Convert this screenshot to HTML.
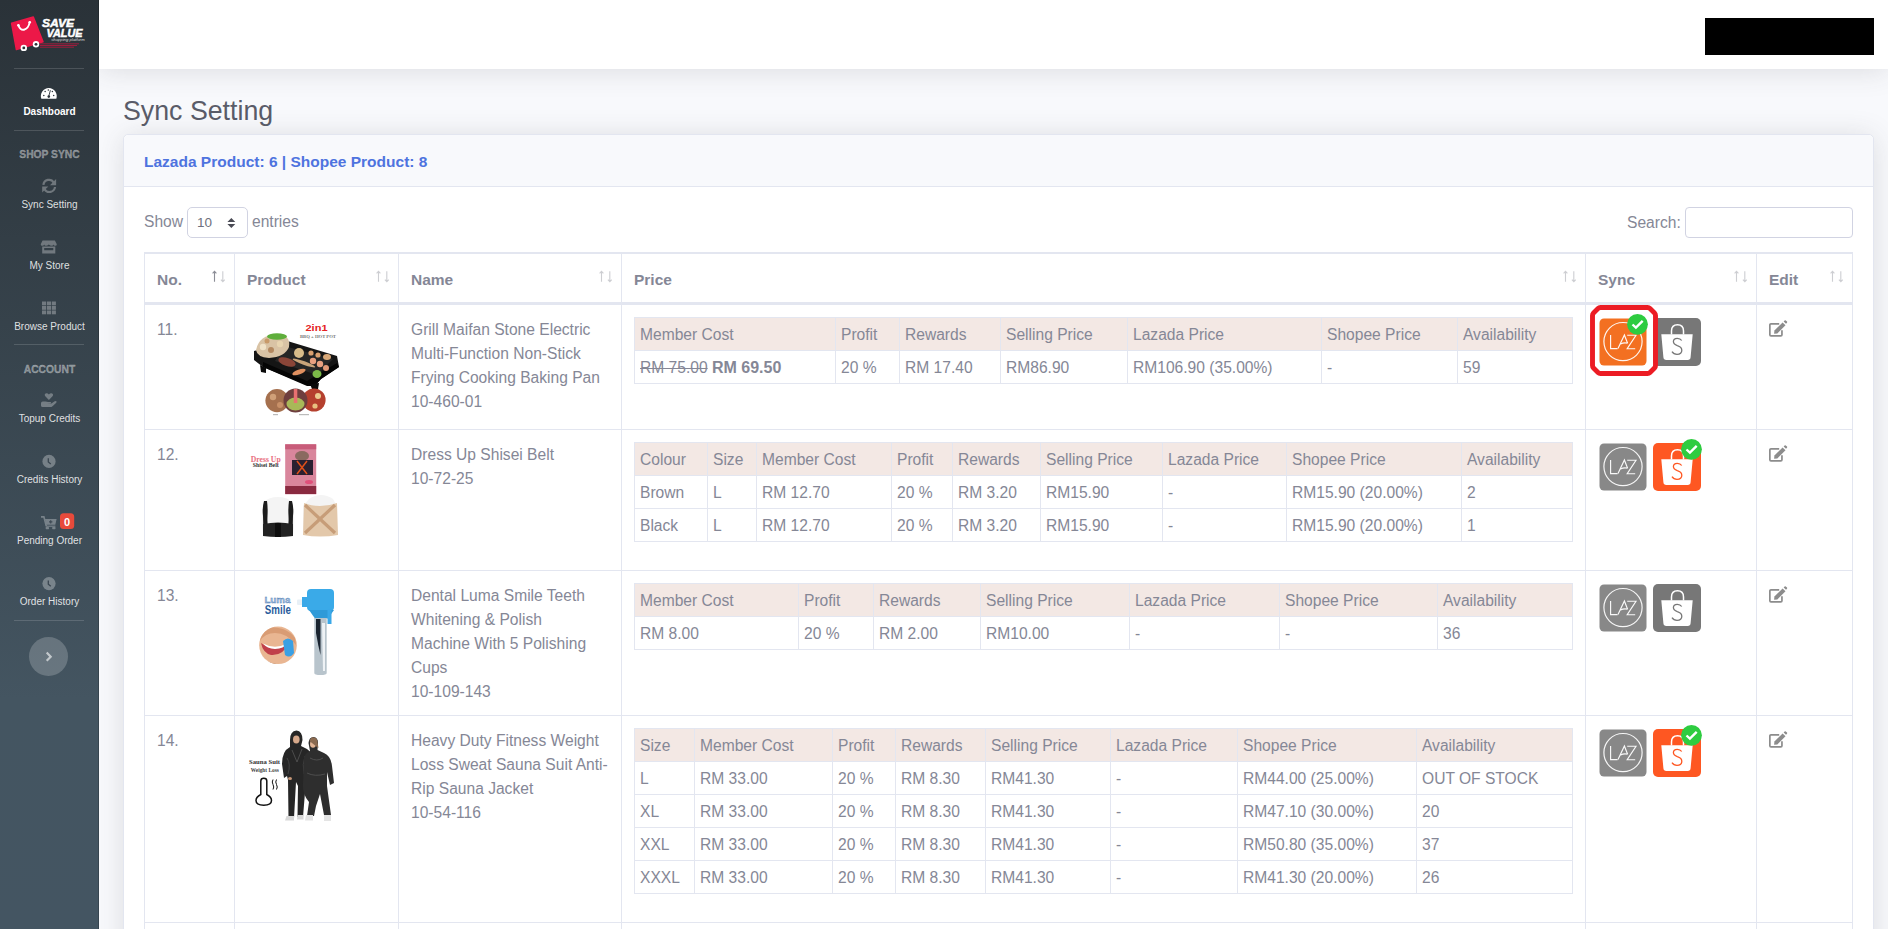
<!DOCTYPE html><html><head><meta charset="utf-8"><style>

*{box-sizing:border-box;margin:0;padding:0}
html,body{width:1888px;height:929px;overflow:hidden}
body{font-family:"Liberation Sans",sans-serif;background:#f8f9fc;color:#858796;font-size:15.6px;line-height:24px;position:relative}
.a{position:absolute;white-space:nowrap}
#sb{position:absolute;left:0;top:0;width:99px;height:929px;background:linear-gradient(180deg,#2a3238 0px,#445561 700px,#445562 929px);z-index:5}
#sb:after{content:"";position:absolute;right:0;top:0;width:1px;height:100%;background:rgba(0,0,0,.18)}
.dv{position:absolute;left:14px;width:70px;height:1px;background:rgba(255,255,255,.15)}
.hd{position:absolute;left:0;width:99px;text-align:center;font-size:10.3px;font-weight:bold;color:rgba(255,255,255,.4);line-height:12px;white-space:nowrap;-webkit-text-stroke:.3px rgba(255,255,255,.4)}
.it{position:absolute;left:0;width:99px;text-align:center;font-size:10px;color:rgba(255,255,255,.85);line-height:12px;white-space:nowrap}
#top{position:absolute;left:99px;top:0;width:1789px;height:69px;background:#fff;box-shadow:0 2px 28px 0 rgba(58,59,69,.15);z-index:3}
#blk{position:absolute;left:1705px;top:18px;width:169px;height:37px;background:#000;z-index:4}
#title{position:absolute;left:123px;top:93px;font-size:28px;line-height:36px;color:#5a5c69;white-space:nowrap;transform:scaleX(.955);transform-origin:0 0}
#card{position:absolute;left:123px;top:134px;width:1751px;height:830px;background:#fff;border:1px solid #e3e6f0;border-radius:5px;box-shadow:0 2px 28px 0 rgba(58,59,69,.15)}
#ch{position:absolute;left:0;top:0;width:1749px;height:52px;background:#f8f9fc;border-bottom:1px solid #e3e6f0;border-radius:5px 5px 0 0}
#ch span{position:absolute;left:20px;top:15px;font-weight:bold;color:#4e73df;font-size:15.5px;line-height:24px;white-space:nowrap}
#sel{position:absolute;left:187px;top:207px;width:61px;height:31px;border:1px solid #d1d3e2;border-radius:5px;background:#fff}
#srch{position:absolute;left:1685px;top:207px;width:168px;height:31px;border:1px solid #d1d3e2;border-radius:4px;background:#fff}
.hl{position:absolute;left:144px;width:1709px;background:#e3e6f0}
.vl{position:absolute;top:252px;width:1px;height:677px;background:#e3e6f0}
.th{position:absolute;font-weight:bold;font-size:15.5px;white-space:nowrap}
.it2{position:absolute;left:634px;width:938px;table-layout:fixed;border-collapse:collapse}
.it2 td{border:1px solid #e3e6f0;padding:5px 5px 3px;height:33px;white-space:nowrap;overflow:hidden;vertical-align:middle}
.it2 tr.h td{background:#f3e8e4}
.ico{position:absolute;width:48px;height:48px;border-radius:5px}

</style></head><body>
<div id="sb">
<div class="dv" style="top:68px"></div>
<div class="it" style="top:106px;font-weight:bold;color:#fff;font-size:10px">Dashboard</div>
<div class="dv" style="top:130px"></div>
<div class="hd" style="top:149px">SHOP SYNC</div>
<div class="it" style="top:199px">Sync Setting</div>
<div class="it" style="top:260px">My Store</div>
<div class="it" style="top:321px">Browse Product</div>
<div class="dv" style="top:344px"></div>
<div class="hd" style="top:364px">ACCOUNT</div>
<div class="it" style="top:413px">Topup Credits</div>
<div class="it" style="top:474px">Credits History</div>
<div class="it" style="top:535px">Pending Order</div>
<div class="it" style="top:596px">Order History</div>
<div class="dv" style="top:620px"></div>
<div style="position:absolute;left:29px;top:637px;width:39px;height:39px;border-radius:50%;background:rgba(255,255,255,.2)"></div>
<svg style="position:absolute;left:0;top:0;z-index:6" width="99" height="700" viewBox="0 0 99 700"><polygon points="11.6,23.3 33.3,17 43,41.8 16.4,49.5" fill="#ec1848" stroke="#ec1848" stroke-width="1.5" stroke-linejoin="round"/><path d="M18.4 25.3Q20.5 30.5 24 29.7Q28.5 28.7 29.7 22.2" fill="none" stroke="#fff" stroke-width="1.9" stroke-linecap="round"/><circle cx="18.4" cy="25.3" r="1.3" fill="#fff"/><circle cx="29.7" cy="22.2" r="1.3" fill="#fff"/><g fill="#9b1e3e"><rect x="40" y="43.3" width="39" height="1" /><rect x="40" y="45" width="37" height="1"/><rect x="40" y="46.7" width="34" height="1"/></g><circle cx="23.8" cy="47.9" r="3.2" fill="#fff"/><circle cx="23.8" cy="47.9" r="1.4" fill="#2a3238"/><circle cx="36" cy="44.3" r="3.2" fill="#fff"/><circle cx="36" cy="44.3" r="1.4" fill="#2a3238"/><text x="42" y="27" font-family="Liberation Sans" font-weight="bold" font-style="italic" font-size="10.2" fill="#fff" stroke="#fff" stroke-width=".45" textLength="32" lengthAdjust="spacingAndGlyphs">SAVE</text><text x="46.5" y="36.8" font-family="Liberation Sans" font-weight="bold" font-style="italic" font-size="10.2" fill="#fff" stroke="#fff" stroke-width=".45" textLength="36" lengthAdjust="spacingAndGlyphs">VALUE</text><text x="51.2" y="41.2" font-family="Liberation Sans" font-style="italic" font-size="2.8" fill="#ddd" textLength="33.5" lengthAdjust="spacingAndGlyphs">shopping platform</text><path d="M41.3 98.7A7.95 7.95 0 1 1 56.3 98.7Z" fill="#fff"/><g fill="#2b323a"><circle cx="43.8" cy="95.4" r=".75"/><circle cx="45.1" cy="91.5" r=".75"/><circle cx="48.3" cy="89.9" r=".75"/><circle cx="52.4" cy="91.5" r=".75"/><circle cx="53.7" cy="95.4" r=".75"/><circle cx="48.8" cy="96.6" r="1.3"/><path d="M48.7 96.5L50.4 90.2" stroke="#2b323a" stroke-width=".9"/></g><g opacity=".3"><g fill="none" stroke="#fff" stroke-width="2.2"><path d="M43.4 184.8A5.6 5.6 0 0 1 53.8 182.6"/><path d="M55 187A5.6 5.6 0 0 1 44.6 189.2"/></g><g fill="#fff"><path d="M56.1 179V185.3H50Z"/><path d="M42.2 192.5V186.4H48.3Z"/></g></g><g fill="#fff" opacity=".3"><path d="M42.6 240.6H54.9L56.8 244.2Q56.8 245.8 55.2 245.8Q53.6 245.8 53.4 244.6Q53.1 245.8 51.7 245.8Q50.2 245.8 48.8 244.6Q47.4 245.8 45.9 245.8Q44.5 245.8 44.2 244.6Q43.9 245.8 42.3 245.8Q40.7 245.8 40.7 244.2Z"/><path d="M42.2 246.6H55.3V253.6H42.2ZM44.2 248V250.3H53.3V248Z" fill-rule="evenodd"/></g><g fill="#fff" opacity=".3"><rect x="42.0" y="301.5" width="4.1" height="3.8"/><rect x="46.9" y="301.5" width="4.1" height="3.8"/><rect x="51.8" y="301.5" width="4.1" height="3.8"/><rect x="42.0" y="306.0" width="4.1" height="3.8"/><rect x="46.9" y="306.0" width="4.1" height="3.8"/><rect x="51.8" y="306.0" width="4.1" height="3.8"/><rect x="42.0" y="310.5" width="4.1" height="3.8"/><rect x="46.9" y="310.5" width="4.1" height="3.8"/><rect x="51.8" y="310.5" width="4.1" height="3.8"/></g><g fill="#fff" opacity=".3"><path d="M48.9 400L45.3 396.3Q44.3 395 45 393.9Q46.2 392.6 47.8 393.6L48.9 394.4L50 393.6Q51.6 392.6 52.8 393.9Q53.5 395 52.5 396.3Z"/><path d="M41 403.3Q41 401.6 42.7 401.5L45.5 401.4Q47 401.4 48 401.9H50.5Q51.4 402.2 51.1 403L50.8 403.3L47.2 403.7L51.4 403.4L54.7 401.2Q55.9 400.7 56.6 401.5Q56.8 402.2 56 403L52.8 405.9Q51.6 407.1 49.8 407.1H42.7Q41 407.1 41 405.5Z"/></g><circle cx="49" cy="461.4" r="6.6" fill="#fff" opacity=".3"/><path d="M48.3 458.2V462.0L50.8 464.0" fill="none" stroke="#3a4650" stroke-width="1.3"/><circle cx="49" cy="583.6" r="6.6" fill="#fff" opacity=".3"/><path d="M48.3 580.4V584.2L50.8 586.2" fill="none" stroke="#3a4650" stroke-width="1.3"/><g opacity=".3"><path d="M41 516.9H43.9L46.3 526.3" fill="none" stroke="#fff" stroke-width="1.6"/><path d="M44.9 519.1H56.6L55.3 524.8H46.2Z" fill="#fff"/><rect x="46.2" y="525.6" width="9.2" height="1.2" fill="#fff"/><rect x="45.7" y="526.9" width="3.3" height="2.3" rx=".6" fill="#fff"/><rect x="52.2" y="526.9" width="3.3" height="2.3" rx=".6" fill="#fff"/></g><path d="M50.7 520.2V523.6M49 521.9H52.4" stroke="#3e4a54" stroke-width="1.2"/><rect x="60" y="513.2" width="14.2" height="15.9" rx="3.5" fill="#e74a3b"/><text x="67.1" y="525.5" text-anchor="middle" font-family="Liberation Sans" font-weight="bold" font-size="11" fill="#fff">0</text><path d="M46.7 652.6L50.7 656.7L46.7 660.8" fill="none" stroke="rgba(255,255,255,.6)" stroke-width="2.2"/></svg></div>
<div id="top"></div><div id="blk"></div>
<div id="title">Sync Setting</div>
<div id="card"><div id="ch"><span>Lazada Product: 6 | Shopee Product: 8</span></div></div>
<div class="a" style="left:144px;top:210px">Show</div>
<div id="sel"><span class="a" style="left:9px;top:3px;font-size:13.5px;color:#6e707e">10</span><svg class="a" style="left:39px;top:10px" width="9" height="10" viewBox="0 0 9 10"><path d="M0.4 3.9L4.35 0L8.3 3.9Z M0.4 6L4.35 9.9L8.3 6Z" fill="#4a4b55"/></svg></div>
<div class="a" style="left:252px;top:210px">entries</div>
<div class="a" style="left:1627px;top:211px">Search:</div>
<div id="srch"></div>
<div class="hl" style="top:252px;height:2px"></div>
<div class="hl" style="top:302px;height:3px"></div>
<div class="hl" style="top:429px;height:1px"></div>
<div class="hl" style="top:570px;height:1px"></div>
<div class="hl" style="top:715px;height:1px"></div>
<div class="hl" style="top:922px;height:1px"></div>
<div class="vl" style="left:144px"></div>
<div class="vl" style="left:234px"></div>
<div class="vl" style="left:398px"></div>
<div class="vl" style="left:621px"></div>
<div class="vl" style="left:1585px"></div>
<div class="vl" style="left:1756px"></div>
<div class="vl" style="left:1852px"></div>
<div class="th" style="left:157px;top:268px">No.</div>
<svg class="a" style="left:211px;top:270px" width="14" height="14" viewBox="0 0 14 14"><g stroke="#5a5c69" stroke-width="1.1" fill="none" opacity=".7"><path d="M3.5 11.8V1.3M1.6 3.3L3.5 1.3L5.4 3.3"/></g><g stroke="#5a5c69" stroke-width="1.1" fill="none" opacity=".3"><path d="M11.8 1.2V11.7M9.9 9.7L11.8 11.7L13.7 9.7"/></g></svg>
<div class="th" style="left:247px;top:268px">Product</div>
<svg class="a" style="left:375px;top:270px" width="14" height="14" viewBox="0 0 14 14"><g stroke="#5a5c69" stroke-width="1.1" fill="none" opacity=".3"><path d="M3.5 11.8V1.3M1.6 3.3L3.5 1.3L5.4 3.3"/></g><g stroke="#5a5c69" stroke-width="1.1" fill="none" opacity=".3"><path d="M11.8 1.2V11.7M9.9 9.7L11.8 11.7L13.7 9.7"/></g></svg>
<div class="th" style="left:411px;top:268px">Name</div>
<svg class="a" style="left:598px;top:270px" width="14" height="14" viewBox="0 0 14 14"><g stroke="#5a5c69" stroke-width="1.1" fill="none" opacity=".3"><path d="M3.5 11.8V1.3M1.6 3.3L3.5 1.3L5.4 3.3"/></g><g stroke="#5a5c69" stroke-width="1.1" fill="none" opacity=".3"><path d="M11.8 1.2V11.7M9.9 9.7L11.8 11.7L13.7 9.7"/></g></svg>
<div class="th" style="left:634px;top:268px">Price</div>
<svg class="a" style="left:1562px;top:270px" width="14" height="14" viewBox="0 0 14 14"><g stroke="#5a5c69" stroke-width="1.1" fill="none" opacity=".3"><path d="M3.5 11.8V1.3M1.6 3.3L3.5 1.3L5.4 3.3"/></g><g stroke="#5a5c69" stroke-width="1.1" fill="none" opacity=".3"><path d="M11.8 1.2V11.7M9.9 9.7L11.8 11.7L13.7 9.7"/></g></svg>
<div class="th" style="left:1598px;top:268px">Sync</div>
<svg class="a" style="left:1733px;top:270px" width="14" height="14" viewBox="0 0 14 14"><g stroke="#5a5c69" stroke-width="1.1" fill="none" opacity=".3"><path d="M3.5 11.8V1.3M1.6 3.3L3.5 1.3L5.4 3.3"/></g><g stroke="#5a5c69" stroke-width="1.1" fill="none" opacity=".3"><path d="M11.8 1.2V11.7M9.9 9.7L11.8 11.7L13.7 9.7"/></g></svg>
<div class="th" style="left:1769px;top:268px">Edit</div>
<svg class="a" style="left:1829px;top:270px" width="14" height="14" viewBox="0 0 14 14"><g stroke="#5a5c69" stroke-width="1.1" fill="none" opacity=".3"><path d="M3.5 11.8V1.3M1.6 3.3L3.5 1.3L5.4 3.3"/></g><g stroke="#5a5c69" stroke-width="1.1" fill="none" opacity=".3"><path d="M11.8 1.2V11.7M9.9 9.7L11.8 11.7L13.7 9.7"/></g></svg>
<div class="a" style="left:157px;top:318px">11.</div>
<div class="a" style="left:411px;top:318px">Grill Maifan Stone Electric<br>Multi-Function Non-Stick<br>Frying Cooking Baking Pan<br>10-460-01</div>
<div class="a" style="left:157px;top:443px">12.</div>
<div class="a" style="left:411px;top:443px">Dress Up Shisei Belt<br>10-72-25</div>
<div class="a" style="left:157px;top:584px">13.</div>
<div class="a" style="left:411px;top:584px">Dental Luma Smile Teeth<br>Whitening &amp; Polish<br>Machine With 5 Polishing<br>Cups<br>10-109-143</div>
<div class="a" style="left:157px;top:729px">14.</div>
<div class="a" style="left:411px;top:729px">Heavy Duty Fitness Weight<br>Loss Sweat Sauna Suit Anti-<br>Rip Sauna Jacket<br>10-54-116</div>
<table class="it2" style="top:317px"><colgroup><col style="width:201px"><col style="width:64px"><col style="width:101px"><col style="width:127px"><col style="width:194px"><col style="width:136px"><col style="width:115px"></colgroup><tr class="h"><td>Member Cost</td><td>Profit</td><td>Rewards</td><td>Selling Price</td><td>Lazada Price</td><td>Shopee Price</td><td>Availability</td></tr><tr><td><s>RM 75.00</s> <b style="font-size:16px">RM 69.50</b></td><td>20 %</td><td>RM 17.40</td><td>RM86.90</td><td>RM106.90 (35.00%)</td><td>-</td><td>59</td></tr></table>
<table class="it2" style="top:442px"><colgroup><col style="width:73px"><col style="width:49px"><col style="width:135px"><col style="width:61px"><col style="width:88px"><col style="width:122px"><col style="width:124px"><col style="width:175px"><col style="width:111px"></colgroup><tr class="h"><td>Colour</td><td>Size</td><td>Member Cost</td><td>Profit</td><td>Rewards</td><td>Selling Price</td><td>Lazada Price</td><td>Shopee Price</td><td>Availability</td></tr><tr><td>Brown</td><td>L</td><td>RM 12.70</td><td>20 %</td><td>RM 3.20</td><td>RM15.90</td><td>-</td><td>RM15.90 (20.00%)</td><td>2</td></tr><tr><td>Black</td><td>L</td><td>RM 12.70</td><td>20 %</td><td>RM 3.20</td><td>RM15.90</td><td>-</td><td>RM15.90 (20.00%)</td><td>1</td></tr></table>
<table class="it2" style="top:583px"><colgroup><col style="width:164px"><col style="width:75px"><col style="width:107px"><col style="width:149px"><col style="width:150px"><col style="width:158px"><col style="width:135px"></colgroup><tr class="h"><td>Member Cost</td><td>Profit</td><td>Rewards</td><td>Selling Price</td><td>Lazada Price</td><td>Shopee Price</td><td>Availability</td></tr><tr><td>RM 8.00</td><td>20 %</td><td>RM 2.00</td><td>RM10.00</td><td>-</td><td>-</td><td>36</td></tr></table>
<table class="it2" style="top:728px"><colgroup><col style="width:60px"><col style="width:138px"><col style="width:63px"><col style="width:90px"><col style="width:125px"><col style="width:127px"><col style="width:179px"><col style="width:156px"></colgroup><tr class="h"><td>Size</td><td>Member Cost</td><td>Profit</td><td>Rewards</td><td>Selling Price</td><td>Lazada Price</td><td>Shopee Price</td><td>Availability</td></tr><tr><td>L</td><td>RM 33.00</td><td>20 %</td><td>RM 8.30</td><td>RM41.30</td><td>-</td><td>RM44.00 (25.00%)</td><td>OUT OF STOCK</td></tr><tr><td>XL</td><td>RM 33.00</td><td>20 %</td><td>RM 8.30</td><td>RM41.30</td><td>-</td><td>RM47.10 (30.00%)</td><td>20</td></tr><tr><td>XXL</td><td>RM 33.00</td><td>20 %</td><td>RM 8.30</td><td>RM41.30</td><td>-</td><td>RM50.80 (35.00%)</td><td>37</td></tr><tr><td>XXXL</td><td>RM 33.00</td><td>20 %</td><td>RM 8.30</td><td>RM41.30</td><td>-</td><td>RM41.30 (20.00%)</td><td>26</td></tr></table>
<svg class="a" style="left:1599px;top:318px;z-index:3;overflow:visible" width="48" height="48" viewBox="0 0 48 48"><rect x="0.5" y="0.5" width="47" height="47" rx="4.5" fill="#f37021"/><circle cx="24" cy="23.6" r="19.1" fill="none" stroke="#fff" stroke-opacity=".92" stroke-width="1.2"/><g fill="none" stroke="#fff" stroke-opacity=".95" stroke-width="1.15" stroke-linejoin="miter"><path d="M11.6 17V30.6H18.6"/><path d="M19 30.6L25.4 17L28.6 25.2M21.5 25.9Q25 24.3 28.6 25.2"/><path d="M28.2 17.2H37L28.2 30.7H36.2"/></g><circle cx="38.5" cy="6.3" r="10.4" fill="#2ecc40"/><path d="M33.5 6.5L36.9 9.7L43.7 2.9" fill="none" stroke="#fff" stroke-width="2.4"/></svg><svg class="a" style="left:1653px;top:318px;z-index:3;overflow:visible" width="48" height="48" viewBox="0 0 48 48"><rect x="0" y="0" width="48" height="48" rx="5" fill="#777777"/><path d="M18.5 16.5V13Q18.5 6.7 24.5 6.7Q30.5 6.7 30.5 13V16.5" fill="none" stroke="#fff" stroke-width="1.5"/><path d="M8.3 16.3H39.7L37.6 39.3Q37.4 42 34.7 42H13.3Q10.6 42 10.4 39.3Z" fill="#fff"/><path d="M28.7 22.5Q27.3 20.3 24.3 20.3Q20.4 20.3 20.4 23.6Q20.4 26.2 24.3 27.6Q28.8 29 28.8 32.2Q28.8 36.3 24 36.3Q20.6 36.3 19 33.6" fill="none" stroke="#777777" stroke-width="1.3"/></svg><svg class="a" style="left:1599px;top:443px;z-index:3;overflow:visible" width="48" height="48" viewBox="0 0 48 48"><rect x="0.5" y="0.5" width="47" height="47" rx="4.5" fill="#888888"/><circle cx="24" cy="23.6" r="19.1" fill="none" stroke="#fff" stroke-opacity=".92" stroke-width="1.2"/><g fill="none" stroke="#fff" stroke-opacity=".95" stroke-width="1.15" stroke-linejoin="miter"><path d="M11.6 17V30.6H18.6"/><path d="M19 30.6L25.4 17L28.6 25.2M21.5 25.9Q25 24.3 28.6 25.2"/><path d="M28.2 17.2H37L28.2 30.7H36.2"/></g></svg><svg class="a" style="left:1653px;top:443px;z-index:3;overflow:visible" width="48" height="48" viewBox="0 0 48 48"><rect x="0" y="0" width="48" height="48" rx="5" fill="#fe5722"/><path d="M18.5 16.5V13Q18.5 6.7 24.5 6.7Q30.5 6.7 30.5 13V16.5" fill="none" stroke="#fff" stroke-width="1.5"/><path d="M8.3 16.3H39.7L37.6 39.3Q37.4 42 34.7 42H13.3Q10.6 42 10.4 39.3Z" fill="#fff"/><path d="M28.7 22.5Q27.3 20.3 24.3 20.3Q20.4 20.3 20.4 23.6Q20.4 26.2 24.3 27.6Q28.8 29 28.8 32.2Q28.8 36.3 24 36.3Q20.6 36.3 19 33.6" fill="none" stroke="#fe5722" stroke-width="1.3"/><circle cx="38.5" cy="6.3" r="10.4" fill="#2ecc40"/><path d="M33.5 6.5L36.9 9.7L43.7 2.9" fill="none" stroke="#fff" stroke-width="2.4"/></svg><svg class="a" style="left:1599px;top:584px;z-index:3;overflow:visible" width="48" height="48" viewBox="0 0 48 48"><rect x="0.5" y="0.5" width="47" height="47" rx="4.5" fill="#888888"/><circle cx="24" cy="23.6" r="19.1" fill="none" stroke="#fff" stroke-opacity=".92" stroke-width="1.2"/><g fill="none" stroke="#fff" stroke-opacity=".95" stroke-width="1.15" stroke-linejoin="miter"><path d="M11.6 17V30.6H18.6"/><path d="M19 30.6L25.4 17L28.6 25.2M21.5 25.9Q25 24.3 28.6 25.2"/><path d="M28.2 17.2H37L28.2 30.7H36.2"/></g></svg><svg class="a" style="left:1653px;top:584px;z-index:3;overflow:visible" width="48" height="48" viewBox="0 0 48 48"><rect x="0" y="0" width="48" height="48" rx="5" fill="#777777"/><path d="M18.5 16.5V13Q18.5 6.7 24.5 6.7Q30.5 6.7 30.5 13V16.5" fill="none" stroke="#fff" stroke-width="1.5"/><path d="M8.3 16.3H39.7L37.6 39.3Q37.4 42 34.7 42H13.3Q10.6 42 10.4 39.3Z" fill="#fff"/><path d="M28.7 22.5Q27.3 20.3 24.3 20.3Q20.4 20.3 20.4 23.6Q20.4 26.2 24.3 27.6Q28.8 29 28.8 32.2Q28.8 36.3 24 36.3Q20.6 36.3 19 33.6" fill="none" stroke="#777777" stroke-width="1.3"/></svg><svg class="a" style="left:1599px;top:729px;z-index:3;overflow:visible" width="48" height="48" viewBox="0 0 48 48"><rect x="0.5" y="0.5" width="47" height="47" rx="4.5" fill="#888888"/><circle cx="24" cy="23.6" r="19.1" fill="none" stroke="#fff" stroke-opacity=".92" stroke-width="1.2"/><g fill="none" stroke="#fff" stroke-opacity=".95" stroke-width="1.15" stroke-linejoin="miter"><path d="M11.6 17V30.6H18.6"/><path d="M19 30.6L25.4 17L28.6 25.2M21.5 25.9Q25 24.3 28.6 25.2"/><path d="M28.2 17.2H37L28.2 30.7H36.2"/></g></svg><svg class="a" style="left:1653px;top:729px;z-index:3;overflow:visible" width="48" height="48" viewBox="0 0 48 48"><rect x="0" y="0" width="48" height="48" rx="5" fill="#fe5722"/><path d="M18.5 16.5V13Q18.5 6.7 24.5 6.7Q30.5 6.7 30.5 13V16.5" fill="none" stroke="#fff" stroke-width="1.5"/><path d="M8.3 16.3H39.7L37.6 39.3Q37.4 42 34.7 42H13.3Q10.6 42 10.4 39.3Z" fill="#fff"/><path d="M28.7 22.5Q27.3 20.3 24.3 20.3Q20.4 20.3 20.4 23.6Q20.4 26.2 24.3 27.6Q28.8 29 28.8 32.2Q28.8 36.3 24 36.3Q20.6 36.3 19 33.6" fill="none" stroke="#fe5722" stroke-width="1.3"/><circle cx="38.5" cy="6.3" r="10.4" fill="#2ecc40"/><path d="M33.5 6.5L36.9 9.7L43.7 2.9" fill="none" stroke="#fff" stroke-width="2.4"/></svg><svg class="a" style="left:1589px;top:304px;z-index:4" width="71" height="74" viewBox="0 0 71 74"><path d="M11.5 3.5H58.5Q60 3.5 61 4.5L65.5 9Q66.5 10 66.5 11.5V61.5Q66.5 63 65.5 64L61 68.5Q60 69.5 58.5 69.5H11.5Q10 69.5 9 68.5L4.5 64Q3.5 63 3.5 61.5V11.5Q3.5 10 4.5 9L9 4.5Q10 3.5 11.5 3.5Z" fill="none" stroke="#ec1c24" stroke-width="4.9" stroke-linejoin="round"/></svg><svg class="a" style="left:1768px;top:321px;z-index:3;overflow:visible" width="20" height="18" viewBox="0 0 20 18"><path d="M11.2 2.85H3Q1.85 2.85 1.85 4V13.7Q1.85 14.85 3 14.85H12.8Q13.95 14.85 13.95 13.7V9.3" fill="none" stroke="#8c8c8c" stroke-width="1.7"/><path d="M6.1 12.7L6.4 9.6L14.6 1.4L17.5 4.3L9.3 12.5Z" fill="#8c8c8c"/><path d="M15.6 0.4L16.6 -0.6Q17.2 -1.1 17.8 -0.6L19 0.6Q19.5 1.2 19 1.8L18 2.8Z" fill="#8c8c8c"/></svg><svg class="a" style="left:1768px;top:446px;z-index:3;overflow:visible" width="20" height="18" viewBox="0 0 20 18"><path d="M11.2 2.85H3Q1.85 2.85 1.85 4V13.7Q1.85 14.85 3 14.85H12.8Q13.95 14.85 13.95 13.7V9.3" fill="none" stroke="#8c8c8c" stroke-width="1.7"/><path d="M6.1 12.7L6.4 9.6L14.6 1.4L17.5 4.3L9.3 12.5Z" fill="#8c8c8c"/><path d="M15.6 0.4L16.6 -0.6Q17.2 -1.1 17.8 -0.6L19 0.6Q19.5 1.2 19 1.8L18 2.8Z" fill="#8c8c8c"/></svg><svg class="a" style="left:1768px;top:587px;z-index:3;overflow:visible" width="20" height="18" viewBox="0 0 20 18"><path d="M11.2 2.85H3Q1.85 2.85 1.85 4V13.7Q1.85 14.85 3 14.85H12.8Q13.95 14.85 13.95 13.7V9.3" fill="none" stroke="#8c8c8c" stroke-width="1.7"/><path d="M6.1 12.7L6.4 9.6L14.6 1.4L17.5 4.3L9.3 12.5Z" fill="#8c8c8c"/><path d="M15.6 0.4L16.6 -0.6Q17.2 -1.1 17.8 -0.6L19 0.6Q19.5 1.2 19 1.8L18 2.8Z" fill="#8c8c8c"/></svg><svg class="a" style="left:1768px;top:732px;z-index:3;overflow:visible" width="20" height="18" viewBox="0 0 20 18"><path d="M11.2 2.85H3Q1.85 2.85 1.85 4V13.7Q1.85 14.85 3 14.85H12.8Q13.95 14.85 13.95 13.7V9.3" fill="none" stroke="#8c8c8c" stroke-width="1.7"/><path d="M6.1 12.7L6.4 9.6L14.6 1.4L17.5 4.3L9.3 12.5Z" fill="#8c8c8c"/><path d="M15.6 0.4L16.6 -0.6Q17.2 -1.1 17.8 -0.6L19 0.6Q19.5 1.2 19 1.8L18 2.8Z" fill="#8c8c8c"/></svg><svg class="a" style="left:247px;top:317px;z-index:3" width="100" height="100" viewBox="0 0 100 100"><text x="69.5" y="14.4" text-anchor="middle" font-family="Liberation Sans" font-weight="bold" font-size="9.5" fill="#e52222" textLength="22" lengthAdjust="spacingAndGlyphs">2in1</text><text x="71" y="21.2" text-anchor="middle" font-family="Liberation Serif" font-weight="bold" font-size="4" fill="#777" textLength="36" lengthAdjust="spacingAndGlyphs">BBQ + HOT POT</text><polygon points="7,34 42,24.5 90,39 92,50 74,62 68,68 60,68 16,50 7,43" fill="#151515"/><polygon points="16,45 60,64 90,46 92,50 74,62 68,69 60,69 16,50" fill="#050505"/><polygon points="13,48 19,51 19,56 14,55" fill="#0a0a0a"/><polygon points="63,67 72,66 71,72 65,72" fill="#0a0a0a"/><polygon points="37,29 86,42 70,58 28,44" fill="#262626"/><path d="M9 33Q12 18 30 17Q44 18 42 30Q38 40 22 41Q10 40 9 33Z" fill="#d9c3a5"/><ellipse cx="30" cy="19.5" rx="10" ry="3.2" fill="#5fae3c"/><circle cx="16" cy="30" r="3.2" fill="#f0e2c8"/><circle cx="24" cy="33" r="3" fill="#b38860"/><circle cx="33" cy="27" r="3.2" fill="#e8d4b0"/><circle cx="20" cy="24" r="2.5" fill="#c89a6a"/><ellipse cx="40" cy="45" rx="9" ry="4" fill="#8a4538" transform="rotate(18 40 45)"/><ellipse cx="57" cy="46" rx="12" ry="1.8" fill="#c9a47a" transform="rotate(20 57 46)"/><ellipse cx="52" cy="36" rx="5" ry="5" fill="#d8bc8a"/><circle cx="66" cy="44" r="3.2" fill="#e8a080"/><circle cx="73" cy="47" r="3.2" fill="#e8a080"/><circle cx="79" cy="51" r="3" fill="#e39a78"/><circle cx="64" cy="36" r="2.6" fill="#d9a070"/><circle cx="71" cy="38" r="2.6" fill="#d9a070"/><ellipse cx="80" cy="40" rx="4" ry="3" fill="#d8a878"/><ellipse cx="52" cy="55" rx="7" ry="2.5" fill="#e09060" transform="rotate(-20 52 55)"/><ellipse cx="70" cy="57" rx="4.5" ry="4" fill="#7cba48"/><circle cx="30" cy="83.6" r="11.6" fill="#a5704e"/><circle cx="67" cy="83" r="11.6" fill="#b5402e"/><circle cx="48.5" cy="83.6" r="12" fill="#6e3e3e"/><ellipse cx="48.5" cy="87" rx="9" ry="6.5" fill="#a8b858"/><rect x="46.8" y="72" width="3.5" height="14" fill="#e87070"/><circle cx="71" cy="79" r="3" fill="#eccc90"/><circle cx="68" cy="89" r="2.6" fill="#e8c080"/><circle cx="26" cy="80" r="3.2" fill="#d0a078"/><circle cx="33" cy="88" r="3" fill="#c89068"/><rect x="26" y="97" width="5" height="1.2" fill="#bbb"/><rect x="52" y="97" width="10" height="1.2" fill="#bbb"/></svg><svg class="a" style="left:247px;top:442px;z-index:3" width="100" height="100" viewBox="0 0 100 100"><text x="18.7" y="19.5" text-anchor="middle" font-family="Liberation Serif" font-weight="bold" font-size="8.5" fill="#e87080" textLength="30" lengthAdjust="spacingAndGlyphs">Dress Up</text><text x="18.7" y="25.3" text-anchor="middle" font-family="Liberation Serif" font-weight="bold" font-size="5.5" fill="#333" textLength="26" lengthAdjust="spacingAndGlyphs">Shisei Belt</text><rect x="38.2" y="2.3" width="31" height="50" fill="#d9869c"/><rect x="38.2" y="2.3" width="31" height="5" fill="#c85c7a"/><ellipse cx="55" cy="14" rx="7" ry="5" fill="#8a6a60"/><path d="M45 18H66V33H45Z" fill="#2a2030"/><path d="M50 19L60 32M60 19L50 32" stroke="#e0501a" stroke-width="1.5"/><rect x="38.2" y="44" width="31" height="8" fill="#8a2a40"/><ellipse cx="62" cy="40" rx="4" ry="2" fill="#e0507a"/><path d="M17 60Q22 55 31 55Q40 55 45 60L47 72Q48 82 46 93H16Q14 82 15 72Z" fill="#f4f4f4"/><path d="M17 59Q15 66 16 74Q16 84 17 93H22Q20 84 20.5 74Q21 66 20 59Z" fill="#1c1c1c"/><path d="M45 59Q47 66 46 74Q46 84 45 93H40Q42 84 41.5 74Q41 66 42 59Z" fill="#1c1c1c"/><path d="M16 82Q31 79 46 82V94Q31 96 16 94Z" fill="#222"/><rect x="28" y="81" width="6" height="14" fill="#0e0e0e"/><path d="M62 57Q68 53 74 53Q80 53 86 57L90 64V93H56V64Z" fill="#f4f4f4"/><path d="M57 61Q64 64 73 64Q82 64 90 61L91 93Q73 96 56 93Z" fill="#e3c8aa"/><path d="M58 63L88 91M88 63L58 91" stroke="#c79d78" stroke-width="3.2"/></svg><svg class="a" style="left:247px;top:583px;z-index:3" width="100" height="100" viewBox="0 0 100 100"><text x="30.4" y="19.6" text-anchor="middle" font-family="Liberation Sans" font-weight="bold" font-size="9.2" fill="#a8c4e4" stroke="#4a78b0" stroke-width=".35" textLength="26" lengthAdjust="spacingAndGlyphs">Luma</text><text x="30.8" y="30.8" text-anchor="middle" font-family="Liberation Sans" font-weight="bold" font-size="12" fill="#2a5c9c" textLength="26" lengthAdjust="spacingAndGlyphs">Smile</text><defs><clipPath id="fc"><circle cx="31" cy="62.3" r="18.8"/></clipPath></defs><circle cx="31" cy="62.3" r="18.8" fill="#e9b692"/><g clip-path="url(#fc)"><path d="M18 45Q26 43 36 46Q44 49 48 55L49 62Q40 50 28 50Q18 50 13 58Q13 50 18 45Z" fill="#d99c74"/><path d="M14 60Q28 70 42 60Q36 73 24 72Q16 70 14 60Z" fill="#c0404a"/><path d="M16 60.5Q28 67 40 60.5Q37 65.5 28 66Q20 65.5 16 60.5Z" fill="#fff"/><path d="M13 70Q18 80 30 81Q22 82 15 76Z" fill="#b07850"/><path d="M36 58Q41 53 46 58L47 70Q43 76 38 72Z" fill="#3aa0e4"/></g><rect x="50" y="16.5" width="6" height="5.5" rx="1" fill="#e8f0f6"/><rect x="55" y="14" width="8" height="10" fill="#3aa8e8"/><rect x="60" y="6" width="27" height="22" rx="4" fill="#3aaae8"/><path d="M62 27H87L81 35.5H68Z" fill="#2f9ad8"/><rect x="80.5" y="26" width="4" height="15" fill="#3aa8e8"/><path d="M67.3 35H79.7V90Q79.7 92 73.5 92Q67.3 92 67.3 90Z" fill="#b8c4cc"/><path d="M69 36H73.5V72Q71 62 69 50Z" fill="#1a2430"/><path d="M75 40H78V88H76Z" fill="#eef2f5"/></svg><svg class="a" style="left:247px;top:728px;z-index:3" width="100" height="100" viewBox="0 0 100 100"><text x="17.5" y="36.3" text-anchor="middle" font-family="Liberation Serif" font-weight="bold" font-size="6.8" fill="#333" textLength="31" lengthAdjust="spacingAndGlyphs">Sauna Suit</text><text x="17.8" y="43.6" text-anchor="middle" font-family="Liberation Serif" font-weight="bold" font-size="5.2" fill="#444" textLength="28" lengthAdjust="spacingAndGlyphs">Weight Loss</text><path d="M13.8 66.5V53Q13.8 50.3 16.8 50.3Q19.8 50.3 19.8 53V66.5Q24.5 69 24.5 72.5Q24.5 77.2 16.8 77.2Q9 77.2 9 72.5Q9 69 13.8 66.5Z" fill="none" stroke="#111" stroke-width="1.5"/><path d="M26 51.5Q24.5 54 26 56.5Q27.5 59 26 61.5M29.5 51.5Q28 54 29.5 56.5Q31 59 29.5 61.5" fill="none" stroke="#111" stroke-width="1"/><path d="M43 12Q43 3 49.5 2.5Q55.5 3 55.5 12L54 18L60 21Q66 25 66 34L65 48L61 50L60 37L59 52L56 89H50.5L51 58L49 54L47 90H41.5L41 52L40 48L37 50L35 36Q35 23 43 19Z" fill="#262626"/><ellipse cx="49.3" cy="11.5" rx="3.3" ry="4" fill="#d6a88a"/><path d="M45 22L50 34L55 21" fill="none" stroke="#555" stroke-width=".8"/><path d="M40 30Q44 36 41 46M58 28Q55 36 57 46" fill="none" stroke="#4a4a4a" stroke-width=".8"/><path d="M39.5 88H47V92.5H38Z" fill="#d8d8d8"/><path d="M50.5 87H56.5V91.5H50Z" fill="#d8d8d8"/><ellipse cx="43" cy="50.5" rx="2" ry="1.6" fill="#c89878"/><path d="M61.5 15Q62 9 66.5 9Q71 9.5 71 15L70.5 22L77 25Q84 28 85 38L87 55L83 57L80 44L80 58L84 87H77L73 66L69 78L67 88H60L62 74Q55 66 56 55L57 30Q58 25 63 23Z" fill="#2e2e2e"/><ellipse cx="66" cy="16" rx="3" ry="3.8" fill="#e2b494"/><path d="M62.5 13Q64 8.5 67 9.5Q70.5 10 70.5 14L71.5 20L70 19Z" fill="#8a6a50"/><path d="M63 30Q70 34 76 30M60 45Q68 49 78 46" fill="none" stroke="#555" stroke-width=".8"/><path d="M59 87H66V92.5H58Z" fill="#e4e4e4"/><path d="M77 87H84V93H77Z" fill="#e4e4e4"/></svg>
</body></html>
